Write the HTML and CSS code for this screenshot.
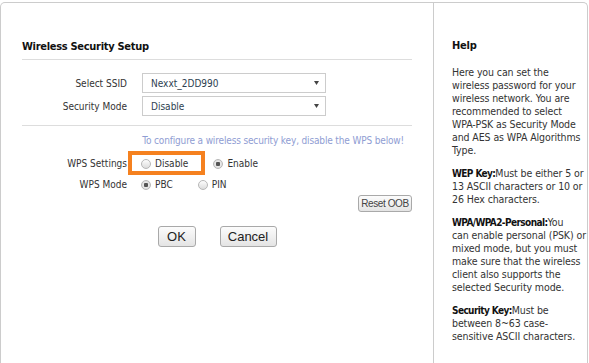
FILE: index.html
```html
<!DOCTYPE html>
<html lang="en">
<head>
    <meta charset="UTF-8">
    <meta name="viewport" content="width=device-width, initial-scale=1.0">
    <title>Wireless Security Setup</title>
    <link rel="stylesheet" href="styles.css">
</head>
<body>
    <div class="page">
        <div class="main">
            <h2 class="title">Wireless Security Setup</h2>

            <div class="form">
                <div class="row">
                    <span class="row-label">Select SSID</span>
                    <div class="select">
                        <span>Nexxt_2DD990</span>
                        <svg class="caret" width="5" height="4" viewBox="0 0 5 4"><path d="M0 0h5L2.5 4z" fill="#444"/></svg>
                    </div>
                </div>
                <div class="row">
                    <span class="row-label">Security Mode</span>
                    <div class="select">
                        <span>Disable</span>
                        <svg class="caret" width="5" height="4" viewBox="0 0 5 4"><path d="M0 0h5L2.5 4z" fill="#444"/></svg>
                    </div>
                </div>
            </div>

            <div class="divider"></div>

            <p class="notice">To configure a wireless security key, disable the WPS below!</p>

            <div class="wps">
                <div class="row radio-row">
                    <span class="row-label">WPS Settings</span>
                    <div class="options">
                        <label class="option option-wide highlight"><span class="radio"></span>Disable</label>
                        <label class="option"><span class="radio checked"></span>Enable</label>
                    </div>
                </div>
                <div class="row radio-row">
                    <span class="row-label">WPS Mode</span>
                    <div class="options">
                        <label class="option option-pbc"><span class="radio checked"></span>PBC</label>
                        <label class="option"><span class="radio"></span>PIN</label>
                    </div>
                </div>
            </div>

            <div class="reset-row">
                <button class="btn btn-small">Reset OOB</button>
            </div>

            <div class="actions">
                <button class="btn btn-ok">OK</button>
                <button class="btn btn-cancel">Cancel</button>
            </div>
        </div>

        <div class="help">
            <h3 class="help-title">Help</h3>
            <p>Here you can set the<br>wireless password for your<br>wireless network. You are<br>recommended to select<br>WPA-PSK as Security Mode<br>and AES as WPA Algorithms<br>Type.</p>
            <p><b>WEP Key:</b>Must be either 5 or<br>13 ASCII characters or 10 or<br>26 Hex characters.</p>
            <p><b>WPA/WPA2-Personal:</b>You<br>can enable personal (PSK) or<br>mixed mode, but you must<br>make sure that the wireless<br>client also supports the<br>selected Security mode.</p>
            <p><b>Security Key:</b>Must be<br>between 8~63 case-<br>sensitive ASCII characters.</p>
        </div>
    </div>
</body>
</html>
```

FILE: styles.css
```css
body {
    margin: 0;
    font-family: "DejaVu Sans Condensed", "DejaVu Sans", sans-serif;
    font-size: 10px;
    color: #333;
    background: #fff;
}

.page {
    display: flex;
    box-sizing: border-box;
    width: 588px;
    height: 361px;
    margin-top: 2px;
    border: 1px solid #ccc;
    border-bottom: none;
    border-radius: 5px 5px 0 0;
}

.main {
    box-sizing: border-box;
    width: 433px;
    padding: 0 21px;
    border-right: 1px solid #ccc;
}

.title {
    margin: 36px 0 0;
    padding-bottom: 4px;
    font-size: 11px;
    line-height: 16px;
    letter-spacing: -0.3px;
    font-weight: bold;
    color: #111;
    border-bottom: 1px solid #ddd;
}

.form {
    margin-top: 13px;
    display: flex;
    flex-direction: column;
    gap: 3px;
}

.row {
    display: grid;
    grid-template-columns: 105px 1fr;
    column-gap: 15px;
    align-items: center;
    height: 20px;
}

.row-label {
    text-align: right;
}

.select {
    box-sizing: border-box;
    width: 184px;
    height: 20px;
    display: flex;
    align-items: center;
    justify-content: space-between;
    padding: 0 6px 0 8px;
    border: 1px solid #ccc;
    color: #2d3e50;
}

.caret {
    display: block;
}

.divider {
    margin-top: 9px;
    border-top: 1px solid #ddd;
}

.notice {
    margin: 7px 0 0;
    padding-right: 8px;
    text-align: right;
    line-height: 16px;
    letter-spacing: -0.15px;
    color: #8f9dd3;
}

.wps {
    margin-top: 4px;
}

.radio-row {
    height: 21px;
}

.options {
    display: flex;
    align-items: center;
    margin-left: -1px;
}

.option {
    display: flex;
    align-items: center;
    gap: 4px;
    height: 21px;
    margin-right: 25px;
}

.highlight {
    position: relative;
    margin-right: 25px;
}

.highlight::after {
    content: "";
    position: absolute;
    left: -13px;
    right: -17px;
    top: -2px;
    bottom: -1px;
    border: 4px solid #f5811f;
}

.radio {
    box-sizing: border-box;
    width: 10px;
    height: 10px;
    border-radius: 50%;
    border: 1px solid #b7b7b7;
    background: linear-gradient(#fdfdfd, #dcdcdc);
}

.radio.checked {
    background: radial-gradient(circle, #555 0, #555 2px, #e8e8e8 2.5px, #d5d5d5 100%);
}

.reset-row {
    display: flex;
    justify-content: flex-end;
}

.btn {
    box-sizing: border-box;
    font-family: "Liberation Sans", Arial, sans-serif;
    font-size: 13px;
    color: #222;
    border: 1px solid #a9a9a9;
    border-radius: 3px;
    background: linear-gradient(#fcfcfc, #e4e4e4);
    padding: 0;
}

.btn-small {
    width: 54px;
    height: 17px;
    font-size: 10px;
    letter-spacing: -0.4px;
    color: #444;
}

.actions {
    display: flex;
    justify-content: center;
    gap: 24px;
    margin-top: 14px;
}

.btn-ok {
    width: 38px;
    height: 21px;
}

.btn-cancel {
    width: 57px;
    height: 21px;
}

.help {
    box-sizing: border-box;
    width: 153px;
    padding: 0 0 0 18px;
    font-size: 10.5px;
    line-height: 13px;
    letter-spacing: -0.1px;
    white-space: nowrap;
    color: #333;
}

.help-title {
    margin: 35px 0 12px;
    font-size: 11px;
    line-height: 16px;
    letter-spacing: -0.2px;
    color: #111;
}

.help p {
    margin: 0 0 10px;
}

.help b {
    font-size: 10px;
    letter-spacing: -0.6px;
    color: #111;
}
```
